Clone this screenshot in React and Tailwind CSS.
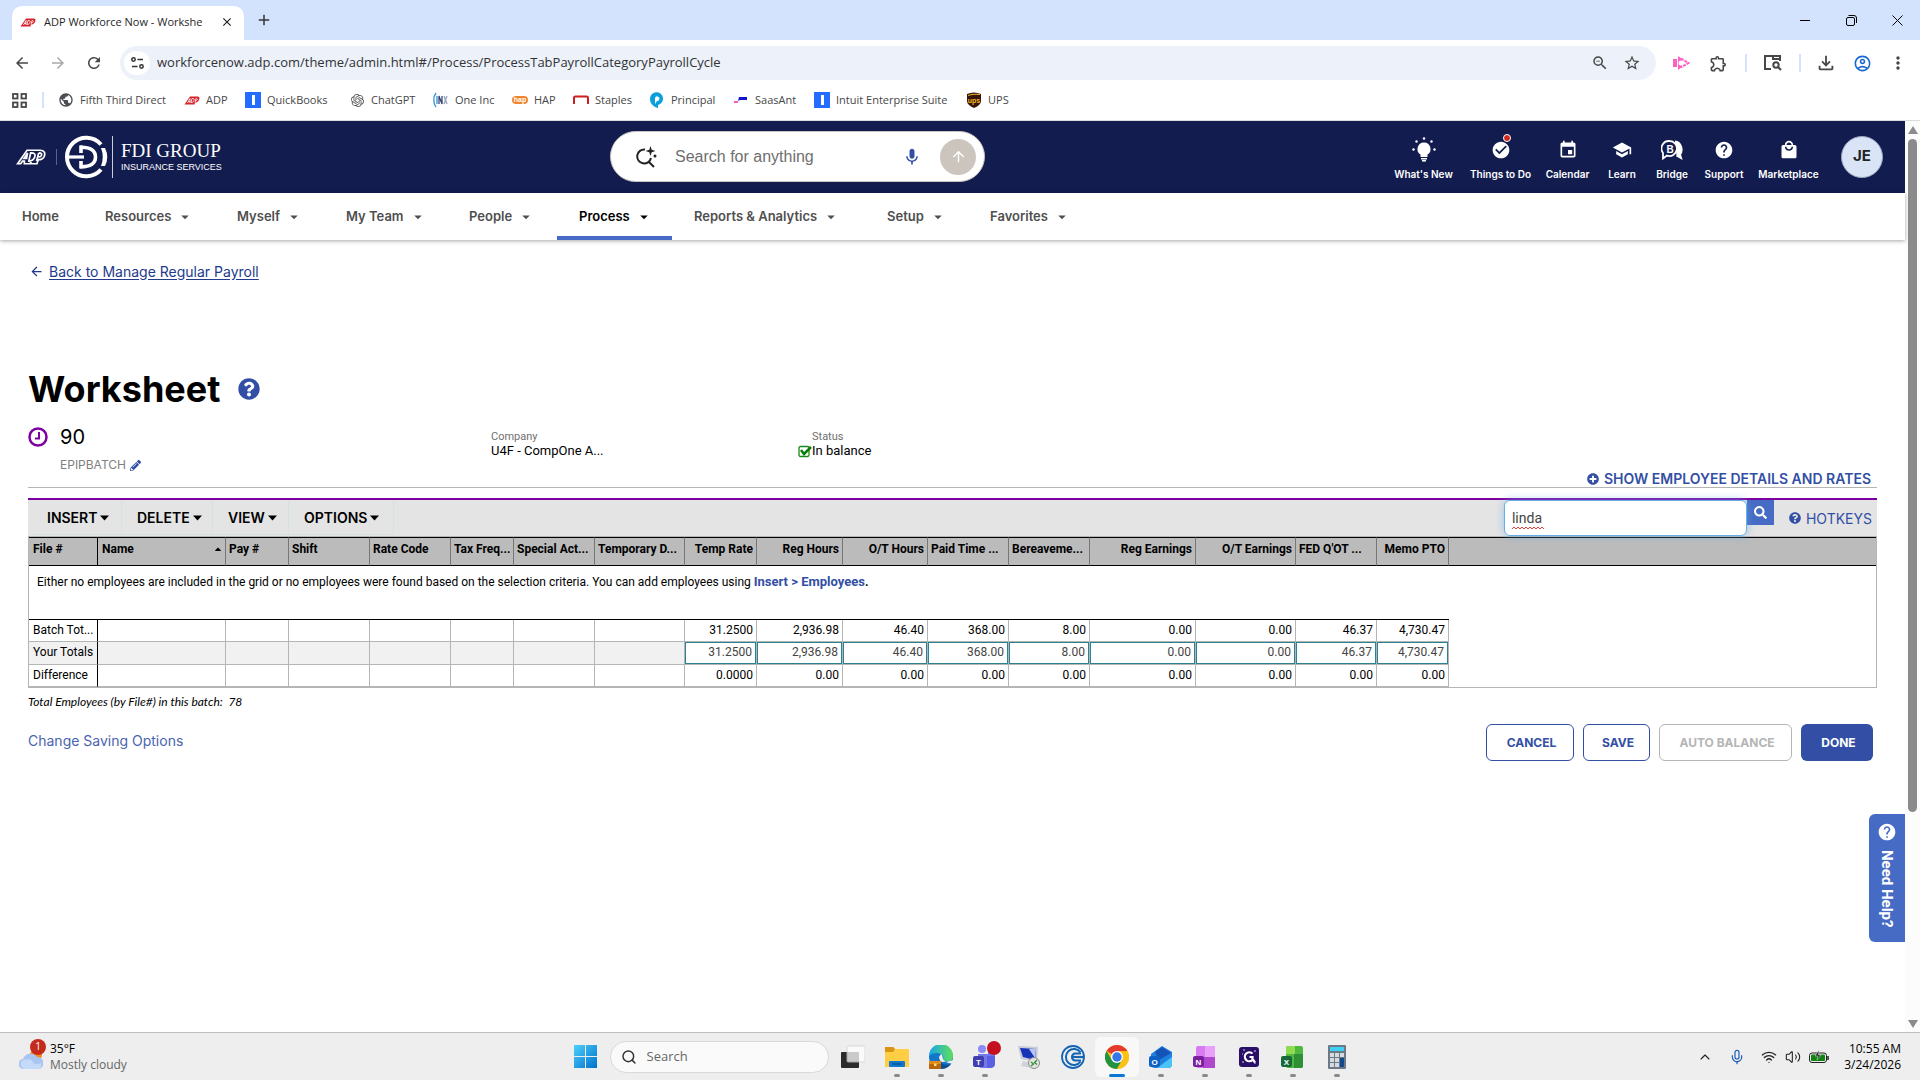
import React from "react";
import {
  MdArrowBack, MdArrowForward, MdRefresh, MdStarBorder, MdOutlineExtension, MdOutlineFileDownload,
  MdOutlineAccountCircle, MdMoreVert, MdEvent, MdSchool, MdHelp, MdCheckCircle, MdMic, MdAdd, MdClose,
  MdArrowUpward, MdArrowDropDown, MdOutlineZoomOut, MdLocalMall, MdPublic,
} from "react-icons/md";
import { FaPencilAlt, FaCaretUp, FaPlusCircle, FaQuestionCircle, FaSearch } from "react-icons/fa";
import { SiOpenai } from "react-icons/si";
import { Mic, Wifi, Volume2, ChevronUp, Search } from "lucide-react";

const AdpMark = ({ w = 16, h = 9 }) => (
  <svg width={w} height={h} viewBox="0 0 32 18" aria-hidden="true">
    <path d="M1 17 L12 1 H27 C31 1 32 4 30 8 C28 12 25 13 22 13 L21 17 Z" fill="#d8232a" />
    <path d="M7 14 L12 5 V14 M9 11 H12 M16 5 L14 13 C18 13 19 11 20 9 C21 6 20 5 16 5 M24 5 L22 13 M24 5 C28 5 28 9 23 9" fill="none" stroke="#fff" strokeWidth="1.6" />
  </svg>
);

const BlueTile = () => (
  <svg width="16" height="16" viewBox="0 0 16 16" aria-hidden="true">
    <rect width="16" height="16" fill="#236cff" />
    <rect x="7" y="3" width="3" height="10" fill="#fff" />
  </svg>
);

const bookmarks = [
  { label: "Fifth Third Direct", w: "w-[126px]", icon: <MdPublic size={16} color="#4a4d51" /> },
  { label: "ADP", w: "w-[61px]", icon: <AdpMark /> },
  { label: "QuickBooks", w: "w-[104px]", icon: <BlueTile /> },
  { label: "ChatGPT", w: "w-[84px]", icon: <SiOpenai size={13} color="#555" /> },
  {
    label: "One Inc", w: "w-[79px]",
    icon: (
      <svg width="16" height="16" viewBox="0 0 16 16" fill="none" aria-hidden="true">
        <path d="M3 1 C0 5 0 11 3 15 M4 4 V12" stroke="#3e9ad6" strokeWidth="1.4" />
        <path d="M6 12 V4 L9 12 V4" stroke="#2b3a6b" strokeWidth="1.2" />
        <path d="M11 4 L14 12 M14 4 L11 12" stroke="#9aa6bd" strokeWidth="1.4" />
      </svg>
    ),
  },
  {
    label: "HAP", w: "w-[61px]",
    icon: (
      <svg width="16" height="16" viewBox="0 0 16 16" aria-hidden="true">
        <rect x="0" y="4" width="16" height="8" rx="4" fill="#f0852d" />
        <text x="8" y="10" fontSize="7" fontWeight="700" textAnchor="middle" fill="#fff" fontFamily="Liberation Sans, sans-serif">hap</text>
      </svg>
    ),
  },
  {
    label: "Staples", w: "w-[76px]",
    icon: (
      <svg width="16" height="16" viewBox="0 0 16 16" aria-hidden="true">
        <path d="M1 12 V6 Q1 4.500 2.500 4.500 H13.500 Q15 4.500 15 6 V12" fill="none" stroke="#cc1f1f" strokeWidth="2" />
      </svg>
    ),
  },
  {
    label: "Principal", w: "w-[84px]",
    icon: (
      <svg width="16" height="16" viewBox="0 0 16 16" aria-hidden="true">
        <path d="M1 7 A6.500 6.500 0 1 1 9 13 L9 16 C5 15 1 12 1 7 Z" fill="#0aa0dc" />
        <path d="M6 9 V6 A2.300 2.300 0 1 1 8 9 L6 12 Z" fill="#fff" />
      </svg>
    ),
  },
  {
    label: "SaasAnt", w: "w-[81px]",
    icon: (
      <svg width="16" height="16" viewBox="0 0 16 16" aria-hidden="true">
        <path d="M6 5 H14 V8 H8 Q6 8 5 9 Z" fill="#1515d0" />
        <path d="M1 9 H5 V11 H1 Z" fill="#ff59b4" />
      </svg>
    ),
  },
  { label: "Intuit Enterprise Suite", w: "w-[152px]", icon: <BlueTile /> },
  {
    label: "UPS", w: "w-[60px]",
    icon: (
      <svg width="16" height="16" viewBox="0 0 16 16" aria-hidden="true">
        <path d="M1 2 Q8 -1 15 2 V9 Q15 13 8 16 Q1 13 1 9 Z" fill="#35160a" />
        <path d="M2 3 Q8 1 14 2 V3 Q8 2 2 4 Z" fill="#f5b324" />
        <text x="8" y="11" fontSize="7" fontWeight="700" textAnchor="middle" fill="#f5b324" fontFamily="Liberation Sans, sans-serif">ups</text>
      </svg>
    ),
  },
];

function BrowserChrome() {
  const btn = "flex items-center justify-center text-[#474747]";
  return (
    <div className="shrink-0 bg-white font-['Open_Sans',sans-serif]">
      <div className="flex h-10 items-end bg-[#d3e3fd] pl-3">
        <div className="flex h-[34px] w-[232px] items-center rounded-t-[10px] bg-white pr-2.5 pb-0.5 pl-2 text-[11px] text-[#1f1f1f]">
          <AdpMark />
          <span className="ml-2 w-[166px] overflow-hidden whitespace-nowrap">ADP Workforce Now - Workshe</span>
          <button aria-label="Close tab" className="ml-auto"><MdClose size={14} /></button>
        </div>
        <button aria-label="New tab" className="mb-2.5 ml-2.5 flex h-5 w-5 items-center justify-center"><MdAdd size={18} color="#333" /></button>
        <div className="ml-auto flex h-10 items-center">
          <button aria-label="Minimize" className="flex w-[46px] justify-center"><svg width="10" height="10"><path d="M0 5.500H10" stroke="#000" /></svg></button>
          <button aria-label="Restore" className="flex w-[46px] justify-center"><svg width="11" height="11" fill="none" stroke="#000"><rect x="0.500" y="2.500" width="8" height="8" rx="1.500" /><path d="M2.500 0.500H8Q10.500 0.500 10.500 3V8" /></svg></button>
          <button aria-label="Close" className="flex w-[46px] justify-center"><svg width="11" height="11" stroke="#000"><path d="M0.500 0.500L10.500 10.500M10.500 0.500L0.500 10.500" /></svg></button>
        </div>
      </div>
      <div className="flex h-[46px] items-center pl-1">
        <button aria-label="Back" className={btn + " w-9"}><MdArrowBack size={18} /></button>
        <button aria-label="Forward" className="flex w-9 items-center justify-center text-[#a9a9a9]"><MdArrowForward size={18} /></button>
        <button aria-label="Reload" className={btn + " w-9"}><MdRefresh size={18} /></button>
        <div className="ml-2 flex h-[34px] flex-1 items-center rounded-full bg-[#ecf1fa] pr-[15px] pl-1">
          <button aria-label="View site information" className="flex h-6 w-[26px] items-center justify-center rounded-full bg-white">
            <svg width="13" height="12" viewBox="0 0 13 12" fill="none" stroke="#333" strokeWidth="1.500"><circle cx="2.500" cy="2.500" r="1.700" /><path d="M6.500 2.500H12M1 9.500H6.500" /><circle cx="10.500" cy="9.500" r="1.700" /></svg>
          </button>
          <input aria-label="Address" className="ml-[7px] min-w-0 flex-1 bg-transparent text-[13px] text-[#333] outline-none" defaultValue="workforcenow.adp.com/theme/admin.html#/Process/ProcessTabPayrollCategoryPayrollCycle" />
          <button aria-label="Zoom" className={btn}><MdOutlineZoomOut size={18} /></button>
          <button aria-label="Bookmark this page" className={btn + " ml-3.5"}><MdStarBorder size={18} /></button>
        </div>
        <div className="flex w-[264px] items-center pl-[17px]">
          <svg width="17" height="16" viewBox="0 0 17 16" fill="none" aria-hidden="true">
            <path d="M0 4H4V12H0ZM5 1L9 4V12L5 15Z" fill="#ff5fc0" />
            <path d="M8 3.500L15.500 8L8 12.500" stroke="#ff5fc0" strokeWidth="2" strokeDasharray="3 1" />
            <circle cx="8" cy="8" r="2.500" fill="#fff" />
          </svg>
          <button aria-label="Extensions" className={btn + " ml-[19px]"}><MdOutlineExtension size={19} /></button>
          <span className="ml-[17px] h-[18px] w-0.5 bg-[#d3e3fd]" />
          <button aria-label="Search side panel" className={btn + " ml-[17px]"}>
            <svg width="18" height="16" viewBox="0 0 18 16" fill="none" stroke="#474747" strokeWidth="2"><path d="M7 14H1V1H16V6M9 1V4H16V1" /><circle cx="12" cy="10" r="2.700" /><path d="M14 12L17 15" /></svg>
          </button>
          <span className="ml-[17px] h-[18px] w-0.5 bg-[#d3e3fd]" />
          <button aria-label="Downloads" className={btn + " ml-3.5"}><MdOutlineFileDownload size={22} /></button>
          <button aria-label="Profile" className="ml-4 text-[#1a67d2]"><MdOutlineAccountCircle size={19} /></button>
          <button aria-label="Menu" className={btn + " ml-4"}><MdMoreVert size={20} /></button>
        </div>
      </div>
      <nav aria-label="Bookmarks" className="flex h-[35px] items-center border-b border-[#dcdcdc] pb-1.5 pl-3 text-[11px] text-[#474747]">
        <button aria-label="Apps" className="w-[30px]">
          <svg width="15" height="15" fill="none" stroke="#474747" strokeWidth="1.800"><rect x="1" y="1" width="4.500" height="4.500" /><rect x="9.500" y="1" width="4.500" height="4.500" /><rect x="1" y="9.500" width="4.500" height="4.500" /><rect x="9.500" y="9.500" width="4.500" height="4.500" /></svg>
        </button>
        <span className="mr-3.5 h-4 w-0.5 bg-[#d3e3fd]" />
        {bookmarks.map((b) => (
          <a key={b.label} href="#" className={"flex shrink-0 items-center whitespace-nowrap " + b.w}>
            <span className="mr-1.5 flex w-4 justify-center">{b.icon}</span>
            {b.label}
          </a>
        ))}
      </nav>
    </div>
  );
}

const BulbIcon = () => (
  <svg width="24" height="26" viewBox="0 0 24 26" fill="#fff" aria-hidden="true">
    <path d="M12 5.500A6.500 6.500 0 0 0 8.500 17.500V20H15.500V17.500A6.500 6.500 0 0 0 12 5.500Z" />
    <rect x="9" y="21" width="6" height="1.500" /><rect x="10" y="23" width="4" height="1.500" />
    <circle cx="12" cy="1.500" r="1.200" /><circle cx="4.500" cy="4.500" r="1.200" /><circle cx="19.500" cy="4.500" r="1.200" /><circle cx="1.500" cy="12.500" r="1.200" /><circle cx="22.500" cy="12.500" r="1.200" />
  </svg>
);

const BridgeIcon = () => (
  <svg width="22" height="20" viewBox="0 0 22 20" aria-hidden="true">
    <path d="M14 1.500A7 8 0 0 1 19 14.500L20 18L15.500 15.500" fill="#fff" stroke="#fff" strokeWidth="2" />
    <path d="M8.500 1A7.500 7.500 0 1 1 6 15.600L2 18.500V13A7.500 7.500 0 0 1 8.500 1Z" fill="#121c4e" stroke="#fff" strokeWidth="1.800" />
    <text x="9" y="12.500" fontSize="10" fontWeight="700" textAnchor="middle" fill="#fff" fontFamily="Liberation Sans, sans-serif">B</text>
  </svg>
);

const quickLinks = [
  { label: "What's New", w: "w-[77px]", icon: <BulbIcon /> },
  {
    label: "Things to Do", w: "w-[77px]",
    icon: (
      <span className="relative block">
        <MdCheckCircle size={20} />
        <span className="absolute -top-1.5 right-0 h-2 w-2 rounded-full border border-white bg-[#d0271d]" />
      </span>
    ),
  },
  { label: "Calendar", w: "w-[57px]", icon: <MdEvent size={20} /> },
  { label: "Learn", w: "w-[52px]", icon: <MdSchool size={20} /> },
  { label: "Bridge", w: "w-[48px]", icon: <BridgeIcon /> },
  { label: "Support", w: "w-[56px]", icon: <MdHelp size={20} /> },
  { label: "Marketplace", w: "w-[73px]", icon: <MdLocalMall size={20} /> },
];

function AppHeader() {
  return (
    <header className="flex h-[72px] shrink-0 items-center bg-[#121c4e] pb-px text-white">
      <div className="flex w-[610px] shrink-0 items-center pl-4">
        <svg width="32" height="18" viewBox="0 0 34 20" fill="none" stroke="#fff" strokeWidth="1.900" aria-label="ADP">
          <path d="M1 17.500L11.500 2.500H26C31 2.500 32 6 30.500 9.500C29 12.500 27 13 24 13L22.500 17.500H15.500L16 15.500L14.500 17.500H8.500V14.500H6.500L4.500 17.500Z" />
          <path d="M8 11.500L12 5.500L11 11.500ZM15.500 5.500L13.500 14.500C17.500 14.500 19 13 20 10C21 7 20.500 5.500 15.500 5.500ZM24.500 5.500L22 14.500M24.500 5.500C28 5.500 28.500 7 27 9C26.500 10 25 10 23.500 10" />
        </svg>
        <span className="ml-2 h-4 w-px bg-[#5a6290]" />
        <svg className="ml-[7px]" width="44" height="44" viewBox="0 0 44 44" fill="none" stroke="#fff" aria-hidden="true">
          <path d="M37 9.500A19.300 19.300 0 1 0 37 34.500" strokeWidth="4" />
          <path d="M37 13H41Q45.500 22 41 31H37Q40.500 22 37 13Z" fill="#fff" stroke="none" />
          <path d="M3 22H20" strokeWidth="3.200" />
          <path d="M17 10.500V18M17 26V33.500" strokeWidth="3.600" />
          <path d="M16 12.300C27 12 31.500 16 31.500 22C31.500 28 27 32 16 31.700" strokeWidth="3.600" />
        </svg>
        <span className="ml-1 h-[42px] w-px bg-[#c9ccda]" />
        <div className="ml-2 flex flex-col">
          <span className="font-['Liberation_Serif',serif] text-[19px] leading-5 whitespace-nowrap">FDI GROUP</span>
          <span className="font-['Liberation_Sans',sans-serif] text-[9px] leading-3 whitespace-nowrap">INSURANCE SERVICES</span>
        </div>
      </div>
      <div className="flex h-[51px] w-[375px] shrink-0 items-center rounded-full border border-[#c9c5c0] bg-white pr-2 pl-6">
        <svg width="22" height="24" viewBox="0 0 22 24" fill="none" stroke="#222" strokeWidth="2" aria-hidden="true">
          <path d="M10 4.500A7 7 0 1 0 16 13M14 17L19 22" />
          <path d="M15.500 1L16.700 4.800L20.500 6L16.700 7.200L15.500 11L14.300 7.200L10.500 6L14.300 4.800Z" fill="#222" stroke="none" />
          <circle cx="20" cy="11" r="1.500" fill="#222" stroke="none" />
        </svg>
        <input aria-label="Search for anything" placeholder="Search for anything" className="ml-[18px] min-w-0 flex-1 font-['Liberation_Sans',sans-serif] text-[16px] text-[#333] outline-none placeholder:text-[#6f6f6f]" />
        <button aria-label="Voice search" className="text-[#324fa5]"><MdMic size={20} /></button>
        <button aria-label="Submit search" className="ml-[18px] flex h-9 w-9 items-center justify-center rounded-full bg-[#cbc5be] text-white"><MdArrowUpward size={17} /></button>
      </div>
      <div className="ml-auto flex items-center pr-[22px]">
        {quickLinks.map((q) => (
          <a key={q.label} href="#" className={"flex h-[52px] shrink-0 flex-col items-center justify-end whitespace-nowrap font-['Inter',sans-serif] text-[10px] font-semibold " + q.w}>
            <span className="flex h-7 items-center">{q.icon}</span>
            <span className="mt-0.5 mb-px leading-4">{q.label}</span>
          </a>
        ))}
        <button className="ml-4 h-[42px] w-[42px] rounded-full border border-[#9aa5bf] bg-[#d9e5f7] font-['Inter',sans-serif] text-[15px] font-bold text-[#222]">JE</button>
      </div>
    </header>
  );
}

const navItems = [
  ["Home", "w-[83px]"], ["Resources", "w-[132px]"], ["Myself", "w-[109px]"], ["My Team", "w-[123px]"], ["People", "w-[110px]"],
  ["Process", "w-[115px]"], ["Reports & Analytics", "w-[193px]"], ["Setup", "w-[103px]"], ["Favorites", "w-[120px]"],
];

function MainNav() {
  return (
    <nav className="flex h-[47px] shrink-0 bg-white font-['Inter',sans-serif] text-[13px] font-semibold text-[#4f4f4f] shadow-[0_1px_4px_rgba(0,0,0,0.35)]">
      {navItems.map(([label, w]) => {
        const active = label === "Process";
        return (
          <button key={label} className={"flex shrink-0 items-center gap-[5px] border-b-4 pt-1 pl-[22px] whitespace-nowrap " + w + (active ? " border-[#466bc4] text-black" : " border-transparent")}>
            {label}
            {label !== "Home" && <MdArrowDropDown size={18} />}
          </button>
        );
      })}
    </nav>
  );
}

const columns = [
  ["File #", "w-[69px]"], ["Name", "w-[128px]"], ["Pay #", "w-[63px]"], ["Shift", "w-[81px]"], ["Rate Code", "w-[81px]"],
  ["Tax Freq...", "w-[63px]"], ["Special Act...", "w-[81px]"], ["Temporary D...", "w-[90px]"], ["Temp Rate", "w-[72px]"],
  ["Reg Hours", "w-[86px]"], ["O/T Hours", "w-[85px]"], ["Paid Time ...", "w-[81px]"], ["Bereaveme...", "w-[81px]"],
  ["Reg Earnings", "w-[106px]"], ["O/T Earnings", "w-[100px]"], ["FED Q'OT ...", "w-[81px]"], ["Memo PTO", "w-[72px]"],
];
const totals = ["31.2500", "2,936.98", "46.40", "368.00", "8.00", "0.00", "0.00", "46.37", "4,730.47"];
const differences = ["0.0000", "0.00", "0.00", "0.00", "0.00", "0.00", "0.00", "0.00", "0.00"];

function TotalsRow({ label, values }) {
  return (
    <tr className="h-[22px]">
      <th scope="row" className="border-r border-b border-r-black border-b-[#b5b5b5] pb-0.5 pl-1 text-left font-normal whitespace-nowrap">{label}</th>
      {Array.from({ length: 7 }, (_, i) => <td key={i} className="border-r border-b border-[#b5b5b5]" />)}
      {values.map((v, i) => <td key={i} className="border-r border-b border-[#b5b5b5] pr-[3px] pb-0.5 text-right">{v}</td>)}
      <td />
    </tr>
  );
}

function Grid() {
  return (
    <table className="w-full table-fixed border-separate border-spacing-0 border border-[#b5b5b5] font-['Roboto',sans-serif] text-[12px] text-black">
      <colgroup>
        {columns.map(([c, w]) => <col key={c} className={w} />)}
        <col />
      </colgroup>
      <thead>
        <tr className="h-[29px] bg-[#bbb]">
          {columns.map(([c], i) => {
            const right = i >= 8 && !c.endsWith("...");
            return (
              <th key={c} scope="col" className={"border-y border-r border-y-black pb-1.5 font-bold whitespace-nowrap " + (i === 0 ? "border-r-black " : "border-r-[#777] ") + (right ? "pr-[3px] text-right" : i < 2 ? "pl-1 text-left" : "pl-[3px] text-left")}>
                {c === "Name" ? <span className="flex items-center justify-between pr-0.5">Name<FaCaretUp size={10} /></span> : c}
              </th>
            );
          })}
          <th aria-label="Spacer" className="border-y border-black" />
        </tr>
      </thead>
      <tbody>
        <tr className="h-[54px]">
          <td colSpan={17} className="border-b border-black pt-1.5 pl-2 align-top">
            Either no employees are included in the grid or no employees were found based on the selection criteria. You can add employees using{" "}
            <a href="#" className="text-[13px] font-bold text-[#324fa5]">Insert &gt; Employees</a><b>.</b>
          </td>
          <td />
        </tr>
        <TotalsRow label="Batch Tot..." values={totals} />
        <tr className="h-[23px]">
          <th scope="row" className="border-r border-b border-r-black border-b-[#b5b5b5] bg-[#f1f1f1] pb-0.5 pl-1 text-left font-normal">Your Totals</th>
          {Array.from({ length: 7 }, (_, i) => <td key={i} className="border-r border-b border-[#b5b5b5] bg-[#f1f1f1]" />)}
          {totals.map((v, i) => (
            <td key={i} className="border-r border-b border-[#b5b5b5] p-0">
              <input aria-label={"Your total, " + columns[i + 8][0]} defaultValue={v} className="block h-[22px] w-full border border-[#2a8294] bg-white pr-[3px] pb-0.5 text-right text-[#444] outline-none" />
            </td>
          ))}
          <td />
        </tr>
        <TotalsRow label="Difference" values={differences} />
      </tbody>
    </table>
  );
}

const MenuCaret = () => <svg width="9" height="6" aria-hidden="true"><path d="M0 0.500H9L4.500 5.500Z" /></svg>;

function Worksheet() {
  const out = "h-[37px] rounded-md border bg-white pl-[3px] font-bold ";
  return (
    <main className="flex-1 px-7 font-['Inter',sans-serif] text-black">
      <a href="#" className="mt-[21px] flex h-5 w-fit items-center text-[14px] text-[#233a8c]">
        <MdArrowBack className="mr-[5px] ml-px" size={15} /><span className="underline underline-offset-2">Back to Manage Regular Payroll</span>
      </a>
      <div className="mt-[84px] flex h-12 items-center gap-[18px]">
        <h1 className="text-[36px] leading-[48px] font-bold">Worksheet</h1>
        <button aria-label="Help" className="text-[#324fa5]"><FaQuestionCircle size={22} /></button>
      </div>
      <section className="flex h-[75px] border-b border-[#b5b5b5]">
        <div className="flex w-[463px] shrink-0 pt-3">
          <svg className="mt-0.5" width="20" height="20" fill="none" aria-hidden="true"><circle cx="10" cy="10" r="8.500" stroke="#7d00a0" strokeWidth="2.500" /><path d="M11 5V11.500H7" stroke="#7d00a0" strokeWidth="2" /></svg>
          <div className="ml-3">
            <div className="text-[20px] leading-6">90</div>
            <div className="mt-2 flex items-center gap-1 text-[12px] leading-4 text-[#808080]">EPIPBATCH<button aria-label="Edit description" className="text-[#324fa5]"><FaPencilAlt size={11} /></button></div>
          </div>
        </div>
        <dl className="w-[307px] shrink-0 pt-[17px] font-['Roboto',sans-serif]">
          <dt className="text-[11px] leading-[13px] text-[#6f6f6f]">Company</dt><dd className="text-[13px] leading-4">U4F - CompOne A...</dd>
        </dl>
        <dl className="pt-[17px] font-['Roboto',sans-serif]">
          <dt className="pl-3.5 text-[11px] leading-[13px] text-[#6f6f6f]">Status</dt>
          <dd className="flex items-center text-[13px] leading-4">
            <svg width="14" height="13" fill="none" aria-hidden="true"><rect x="1" y="1.500" width="10" height="10" rx="1.500" stroke="#188a18" strokeWidth="1.300" /><path d="M3 5L6 9L13 2" stroke="#0a7d0a" strokeWidth="2.500" /></svg>In balance
          </dd>
        </dl>
        <a href="#" className="mt-auto mr-1.5 ml-auto flex items-center gap-[5px] text-[14px] leading-4 font-semibold text-[#324fa5]"><FaPlusCircle size={12} />SHOW EMPLOYEE DETAILS AND RATES</a>
      </section>
      <div className="mt-2.5 flex h-[38px] border-t-2 border-[#7d00a0] bg-[#e4e4e4] pl-1">
        {[["INSERT", "w-[90px]"], ["DELETE", "w-[91px]"], ["VIEW", "w-[76px]"], ["OPTIONS", "w-[105px]"]].map(([l, w]) => (
          <button key={l} className={"flex h-[35px] shrink-0 items-center gap-[3px] border-r border-b border-[#d5e2e4] pt-px pl-[15px] text-[14px] font-semibold " + w}>{l}<MenuCaret /></button>
        ))}
        <div className="ml-auto flex">
          <div className="relative">
            <input aria-label="Search employees" defaultValue="linda" spellCheck={false} className="h-9 w-[243px] rounded-md border border-[#66afe9] bg-white px-[7px] font-['Roboto',sans-serif] text-[14px] text-[#444] shadow-[0_0_8px_rgba(102,175,233,0.6)] outline-none" />
            <svg className="pointer-events-none absolute bottom-1.5 left-2" width="32" height="4" fill="none" stroke="#e8403a" aria-hidden="true"><path d="M0 3L2 1L4 3L6 1L8 3L10 1L12 3L14 1L16 3L18 1L20 3L22 1L24 3L26 1L28 3L30 1L32 3" /></svg>
          </div>
          <button aria-label="Search" className="flex h-[25px] w-[27px] items-center justify-center bg-[#466bc4] text-white"><FaSearch size={13} /></button>
          <a href="#" className="mr-[5px] ml-[15px] flex items-center gap-[5px] text-[14px] text-[#324fa5]"><FaQuestionCircle size={12} />HOTKEYS</a>
        </div>
      </div>
      <Grid />
      <p className="mt-1 font-['Lato',sans-serif] text-[12px] leading-5 italic">Total Employees (by File#) in this batch:&nbsp; 78</p>
      <div className="mt-3 flex items-start">
        <a href="#" className="mt-[7px] text-[14px] leading-5 text-[#4a63b0]">Change Saving Options</a>
        <div className="mr-1 ml-auto flex text-[12px]">
          <button className={out + "w-[88px] border-[#324fa5] text-[#324fa5]"}>CANCEL</button>
          <button className={out + "ml-[9px] w-[67px] border-[#324fa5] text-[#324fa5]"}>SAVE</button>
          <button className={out + "ml-[9px] w-[133px] border-[#b5b5b5] text-[#b5b5b5]"}>AUTO BALANCE</button>
          <button className="ml-[9px] h-[37px] w-[72px] rounded-md bg-[#324fa5] pl-[3px] font-bold text-white">DONE</button>
        </div>
      </div>
    </main>
  );
}

const Scrollbar = () => (
  <div className="flex w-[15px] shrink-0 flex-col items-center bg-[#fcfcfc]">
    <svg className="mt-[5px]" width="10" height="8" fill="#8b8b8b" aria-hidden="true"><path d="M5 0L10 8H0Z" /></svg>
    <span className="mt-[5px] h-[673px] w-[9px] rounded-full bg-[#8b8b8b]" />
    <svg className="mt-auto mb-1" width="10" height="8" fill="#8b8b8b" aria-hidden="true"><path d="M0 0H10L5 8Z" /></svg>
  </div>
);

const Folder = () => (
  <svg width="24" height="24" viewBox="0 0 24 24"><path d="M0 2H8L10 5H20V9H0Z" fill="#d99411" /><rect y="4" width="24" height="18" rx="1" fill="#ffce45" /><path d="M0 2H8L10 4L8 7H0Z" fill="#d99411" /><rect x="4" y="16" width="16" height="6" rx="1" fill="#1078cd" /><rect x="7" y="18" width="10" height="2" fill="#075ea8" /></svg>
);
const Edge = () => (
  <svg width="24" height="24" viewBox="0 0 24 24"><defs><linearGradient id="edgeTop" x1="0" x2="1"><stop stopColor="#1aa5e8" /><stop offset="1" stopColor="#5fe05a" /></linearGradient></defs><circle cx="12" cy="12" r="12" fill="#1277c9" /><path d="M0 11A12 12 0 0 1 24 11C24 16 19 17 15 16C12 15 17 12 12 9C8 7 3 8 0 11Z" fill="url(#edgeTop)" /><path d="M10 13C10 18 15 21 22 19C19 23 14 25 9 23Z" fill="#0c4d94" /><path d="M12 9C15 11 12 15 17 16.500C13 18 10 16 10 12Z" fill="#eee" /><path d="M17 17L24 15L23 18Q20 19 17 17Z" fill="#eee" /><rect y="16" width="12" height="8" fill="#b9650d" /><path d="M0 16H12V19H0Z" fill="#e08a1a" /><rect x="5" y="18.500" width="2.500" height="2.500" fill="#ffe07a" /></svg>
);
const LetterTile = ({ x = 0, y = 11, fill, children }) => (
  <>
    <rect x={x} y={y} width="11" height="11" rx="2" fill={fill} />
    <text x={x + 5.5} y={y + 8.5} fontSize="8" fontWeight="700" textAnchor="middle" fill="#fff" fontFamily="Liberation Sans, sans-serif">{children}</text>
  </>
);
const Teams = () => (
  <span className="relative block">
    <svg width="24" height="24" viewBox="0 0 24 24"><circle cx="9" cy="4" r="4" fill="#8a8df5" /><circle cx="18" cy="7" r="3" fill="#5058d8" /><path d="M5 9H22V19Q22 23 17 23H9Q5 23 5 19Z" fill="#7477ec" /><path d="M14 11H22V18Q22 23 16 23H14Z" fill="#5b60e0" /><LetterTile y={11} fill="#3d3fb0">T</LetterTile></svg>
    <span className="absolute -top-1 -right-1 h-3.5 w-3.5 rounded-full bg-[#c50f1f]" />
  </span>
);
const RemoteDesktop = () => (
  <svg width="24" height="24" viewBox="0 0 24 24"><path d="M6 16L16 18L14 23L4 21Z" fill="#cfd2d8" /><path d="M1 1L21 2L20 17L4 14Z" fill="#c7cbd8" /><path d="M3 3L19 4L18 15L6 12Z" fill="#1733b8" /><path d="M12 4L19 4L18 13Z" fill="#b7c6f2" /><circle cx="17" cy="18" r="5.500" fill="#e3e3df" stroke="#8c8c8c" /><path d="M14 17L16.500 19L14 21M20 15L17.500 17.500L20 19.500" fill="none" stroke="#2f8f3a" strokeWidth="1.300" /></svg>
);
const CircleC = () => (
  <svg width="24" height="24" viewBox="0 0 24 24" fill="none" stroke="#1464b4"><circle cx="12" cy="12" r="11" strokeWidth="1.800" /><path d="M19.500 7.500A8 8 0 1 0 19.500 16.500" strokeWidth="2" /><path d="M23 12H12" strokeWidth="2.200" /><path d="M20 8.500H13.500A3.700 3.700 0 0 0 13.500 15.500H20" strokeWidth="2" /></svg>
);
const Chrome = () => (
  <svg width="24" height="24" viewBox="0 0 24 24"><circle cx="12" cy="12" r="12" fill="#fbc116" /><path d="M12 12L1.600 6A12 12 0 0 1 22.400 6H12Z" fill="#e33b2e" /><path d="M1.600 6A12 12 0 0 0 12 24L17.200 15L12 12L6.800 15Z" fill="#229342" /><path d="M12 6H22.400A12 12 0 0 1 12 24L17.200 15Z" fill="#fbc116" /><circle cx="12" cy="12" r="6" fill="#fff" /><circle cx="12" cy="12" r="4.700" fill="#3478e5" /></svg>
);
const Outlook = () => (
  <svg width="24" height="24" viewBox="0 0 24 24"><path d="M2 9L13 1L23 7V19Q23 23 19 23H6Q2 23 2 19Z" fill="#1d7fe0" /><path d="M6 7L13 2L22 8L10 15Z" fill="#1653b5" /><path d="M23 9V19Q23 23 19 23H8L23 12Z" fill="#4cc3f5" /><LetterTile fill="#0f62c5">O</LetterTile></svg>
);
const OneNote = () => (
  <svg width="24" height="24" viewBox="0 0 24 24"><rect x="3" y="1" width="19" height="22" rx="2" fill="#d97bf0" /><path d="M12 1H22V12H12Z" fill="#e9a0fa" /><path d="M10 12H22V23H10Z" fill="#b047cf" /><LetterTile fill="#7a1fa0">N</LetterTile></svg>
);
const PurpleG = () => (
  <svg width="24" height="24" viewBox="0 0 24 24"><rect x="2" y="2" width="20" height="20" rx="3" fill="#2a0f66" /><path d="M15.500 8.500A4.500 4.500 0 1 0 15.500 15V12H12.500M15.500 14L18 17.500" fill="none" stroke="#fff" strokeWidth="2.200" /><path d="M6 5H8M5 17H7M17 18H19M18 5V7M5 9H6" stroke="#d8c8ff" /></svg>
);
const Excel = () => (
  <svg width="24" height="24" viewBox="0 0 24 24"><rect x="5" y="1" width="17" height="22" rx="2" fill="#4fb83f" /><path d="M5 3Q5 1 7 1H14V9H5Z" fill="#8fdb52" /><path d="M13 9H22V21Q22 23 20 23H13Z" fill="#2e8f35" /><LetterTile fill="#17693a">X</LetterTile></svg>
);
const Calculator = () => (
  <svg width="24" height="24" viewBox="0 0 24 24"><rect x="3" width="18" height="24" rx="1" fill="#6d7a86" /><rect x="5" y="2" width="14" height="4" fill="#3fd0f5" /><path d="M5 8H9V12H5ZM10 8H14V12H10ZM15 8H19V12H15ZM5 13H9V17H5ZM10 13H14V17H10ZM5 18H9V22H5ZM10 18H14V22H10Z" fill="#d5dbe0" /><rect x="15" y="13" width="4" height="9" fill="#0f4a8f" /></svg>
);
const TaskView = () => (
  <svg width="24" height="24" viewBox="0 0 24 24"><rect x="0" y="7" width="18" height="16" rx="1" fill="#2b2b2b" /><rect x="6" y="1" width="18" height="16" rx="1" fill="#fff" opacity=".75" stroke="#d0d0d0" /></svg>
);

const apps = [
  ["Task view", TaskView, false], ["File Explorer", Folder, true], ["Edge", Edge, true], ["Teams", Teams, true], ["Remote Desktop", RemoteDesktop, false],
  ["CompOne", CircleC, false], ["Chrome", Chrome, true], ["Outlook", Outlook, true], ["OneNote", OneNote, true], ["Capture", PurpleG, true], ["Excel", Excel, true], ["Calculator", Calculator, true],
];

function Taskbar() {
  return (
    <footer className="flex h-12 shrink-0 items-center border-t border-[#bdbdbd] bg-[#eee] font-['Open_Sans',sans-serif] text-[12px]">
      <div className="flex flex-1 items-center pl-[19px]">
        <div className="relative">
          <svg width="24" height="28" viewBox="0 0 24 28" aria-hidden="true"><circle cx="17" cy="12" r="6" fill="#f58a1f" /><path d="M5 26A5 5 0 0 1 4 16A8 8 0 0 1 18 14A6 6 0 0 1 19 26Z" fill="#a9c5f2" /><path d="M5 26A5 5 0 0 1 4 17Q12 15 14 19T22 20A5 5 0 0 1 19 26Z" fill="#c5d9f8" /></svg>
          <span className="absolute -top-1 left-[11px] flex h-4 w-4 items-center justify-center rounded-full bg-[#c42b1c] text-[10px] text-white">1</span>
        </div>
        <div className="ml-[7px] leading-4 whitespace-nowrap"><div>35°F</div><div className="text-[#666]">Mostly cloudy</div></div>
      </div>
      <div className="flex items-center pl-3">
        <button aria-label="Start">
          <svg width="23" height="23" viewBox="0 0 23 23"><defs><linearGradient id="start" x1="0" y1="0" x2="1" y2="1"><stop stopColor="#4cd0fb" /><stop offset="1" stopColor="#0070cc" /></linearGradient></defs><path d="M0 0H11V11H0ZM12 0H23V11H12ZM0 12H11V23H0ZM12 12H23V23H12Z" fill="url(#start)" /></svg>
        </button>
        <label className="ml-[13px] flex h-8 w-[219px] items-center rounded-full border border-[#d9d9d9] bg-[#fafafa] pl-2.5">
          <Search size={16} strokeWidth={2.2} color="#333" />
          <input aria-label="Search" placeholder="Search" className="ml-2.5 w-40 bg-transparent text-[13px] outline-none placeholder:text-[#666]" />
        </label>
        <div className="flex pl-0.5">
          {apps.map(([name, Icon, running]) => (
            <button key={name} aria-label={name} className={"relative flex h-10 w-11 items-center justify-center rounded-md " + (name === "Chrome" ? "bg-[#f8f8f8]" : "")}>
              <Icon />
              {running && <span className={"absolute bottom-0 h-[3px] rounded-full " + (name === "Chrome" ? "w-4 bg-[#0a78d4]" : "w-1.5 bg-[#8a8a8a]")} />}
            </button>
          ))}
        </div>
      </div>
      <div className="flex flex-1 items-center justify-end pr-[19px]">
        <ChevronUp size={16} color="#222" strokeWidth={1.6} />
        <Mic className="ml-4" size={16} color="#1b5fb5" strokeWidth={1.8} />
        <Wifi className="ml-4" size={16} color="#222" strokeWidth={2} />
        <Volume2 className="ml-2" size={16} color="#222" strokeWidth={1.6} />
        <svg className="ml-2" width="20" height="14" viewBox="0 0 20 14" aria-hidden="true"><rect x="0.500" y="3" width="17" height="9.500" rx="2.500" fill="none" stroke="#222" /><rect x="2" y="4.500" width="14" height="6.500" rx="1" fill="#128412" /><path d="M19 6V10" stroke="#222" strokeWidth="1.500" /><path d="M10 0L6 6H9L8 10L12 5H9.500Z" fill="#222" stroke="#eee" strokeWidth=".5" /></svg>
        <div className="w-[72px] text-right leading-4 whitespace-nowrap"><div>10:55 AM</div><div>3/24/2026</div></div>
      </div>
    </footer>
  );
}

export default function App() {
  return (
    <div className="flex min-h-screen flex-col bg-white">
      <BrowserChrome />
      <div className="flex flex-1">
        <div className="relative flex min-w-0 flex-1 flex-col">
          <AppHeader />
          <MainNav />
          <Worksheet />
          <button className="absolute right-0 bottom-[90px] flex h-32 w-9 items-center gap-2 rounded-l-md bg-[#466bc4] font-['Roboto',sans-serif] text-[15px] font-bold text-white [writing-mode:vertical-rl]">
            <MdHelp className="mt-2" size={20} />Need Help?
          </button>
        </div>
        <Scrollbar />
      </div>
      <Taskbar />
    </div>
  );
}
